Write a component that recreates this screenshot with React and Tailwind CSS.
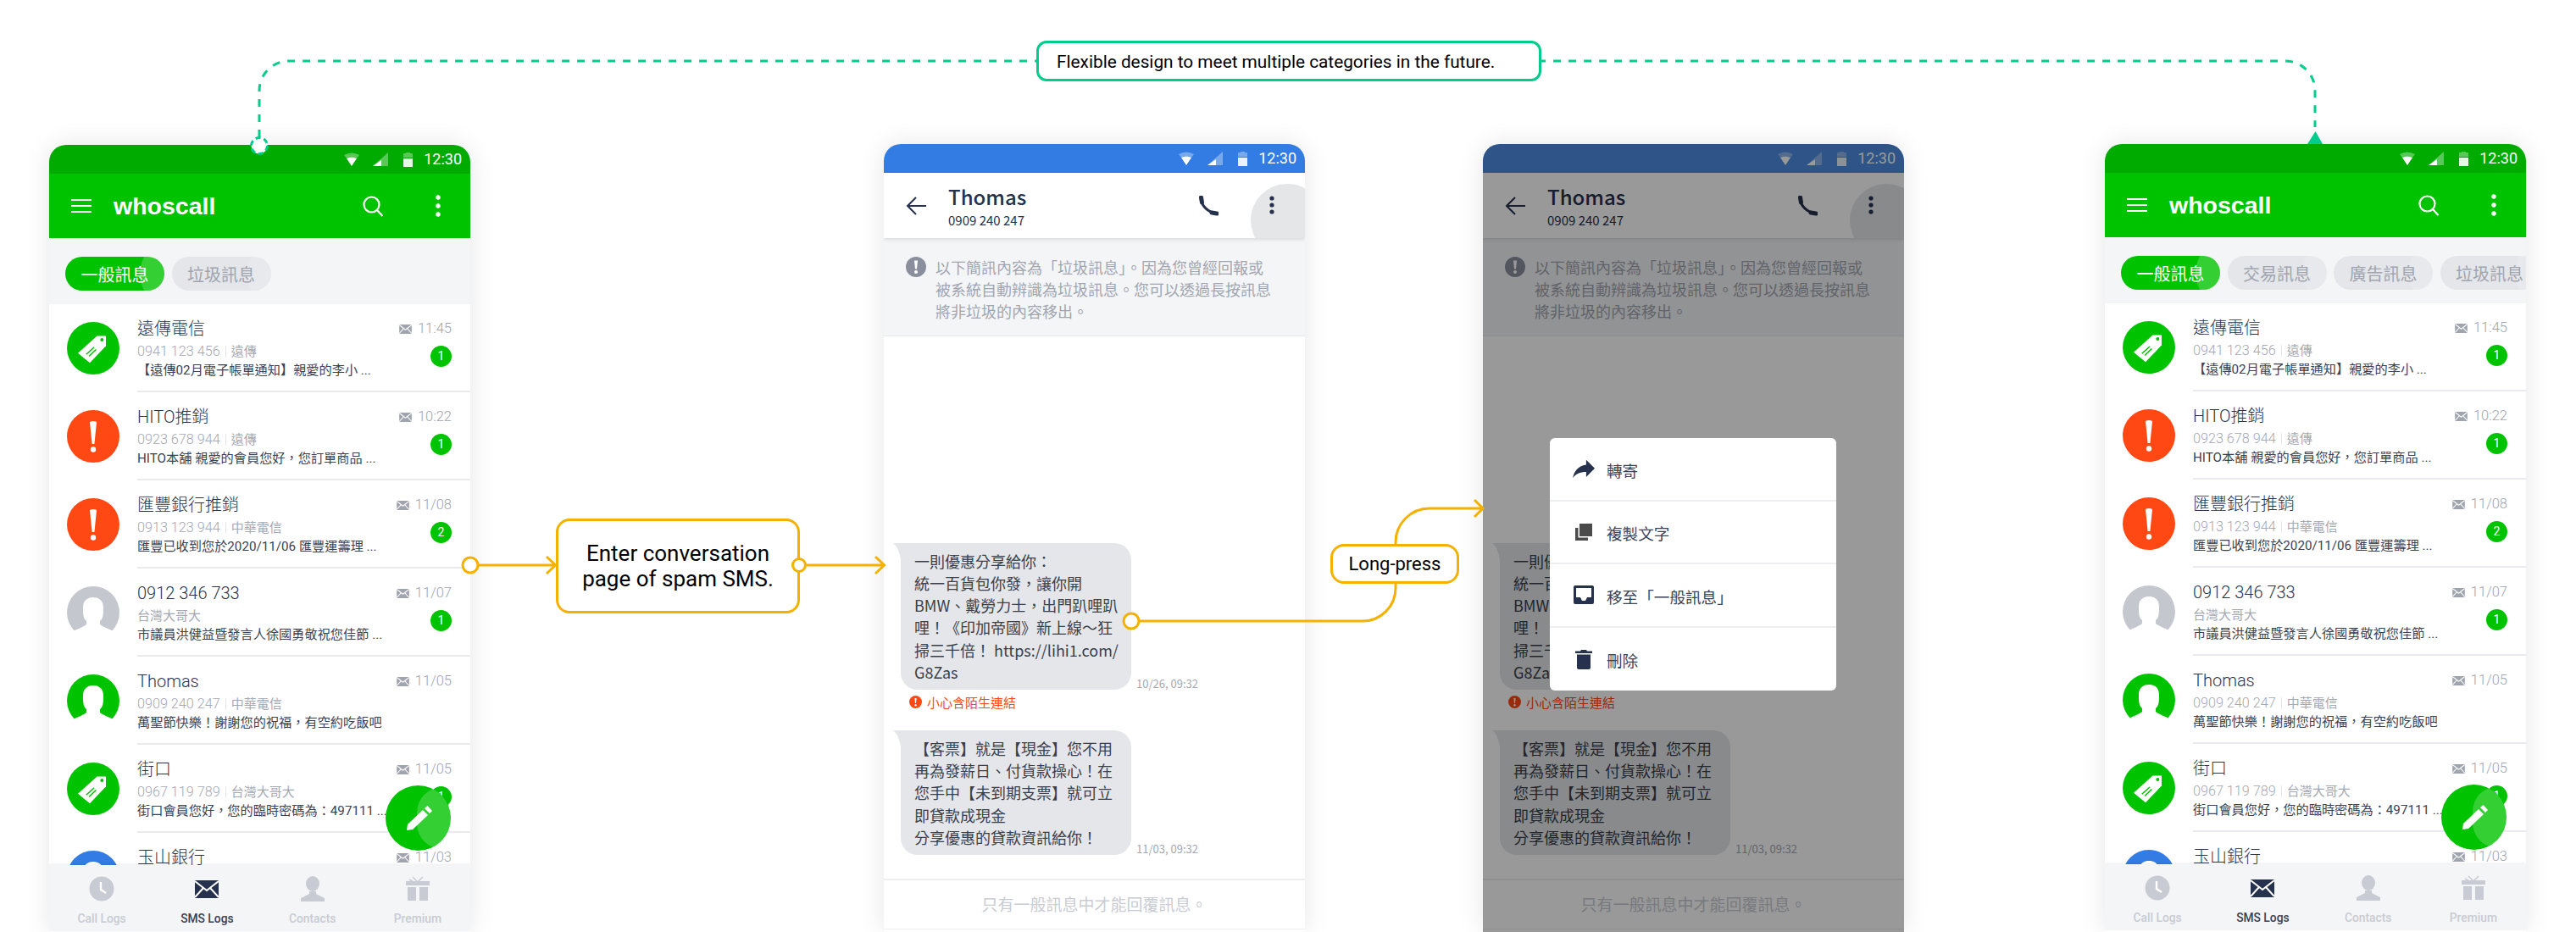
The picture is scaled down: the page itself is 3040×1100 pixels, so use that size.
import React from "react";

const rows = [
  { kind: "tag", title: "遠傳電信", num: "0941 123 456", carrier: "遠傳", text: "【遠傳02月電子帳單通知】親愛的李小 ...", time: "11:45", badge: 1 },
  { kind: "warn", title: "HITO推銷", num: "0923 678 944", carrier: "遠傳", text: "HITO本舖 親愛的會員您好，您訂單商品 ...", time: "10:22", badge: 1 },
  { kind: "warn", title: "匯豐銀行推銷", num: "0913 123 944", carrier: "中華電信", text: "匯豐已收到您於2020/11/06 匯豐運籌理 ...", time: "11/08", badge: 2 },
  { kind: "grey", title: "0912 346 733", carrier: "台灣大哥大", text: "市議員洪健益暨發言人徐國勇敬祝您佳節 ...", time: "11/07", badge: 1 },
  { kind: "green", title: "Thomas", num: "0909 240 247", carrier: "中華電信", text: "萬聖節快樂！謝謝您的祝福，有空約吃飯吧", time: "11/05" },
  { kind: "tag", title: "街口", num: "0967 119 789", carrier: "台灣大哥大", text: "街口會員您好，您的臨時密碼為：497111 ...", time: "11/05", badge: 1 },
  { kind: "blue", title: "玉山銀行", time: "11/03" },
];

function StatusBar({ bg }) {
  return (
    <div className={`h-[34px] shrink-0 flex items-center justify-end pr-[10px] ${bg}`}>
      <svg viewBox="0 0 18 16" className="w-[18px] h-[16px] mr-[16px]">
        <path d="M0 3 Q9 -2 18 3 L15 7 Q9 4 3 7Z" fill="#fff" fillOpacity="0.35" />
        <path d="M3 7 Q9 4 15 7 L9 16Z" fill="#fff" />
      </svg>
      <svg viewBox="0 0 18 16" className="w-[18px] h-[16px] mr-[18px]">
        <path d="M18 0V16H0Z" fill="#fff" fillOpacity="0.35" />
        <path d="M10 8.9V16H0Z" fill="#fff" />
      </svg>
      <svg viewBox="0 0 11 17" className="w-[11px] h-[17px] mr-[13px]">
        <path d="M3 0H8V1H11V6H0V1H3Z" fill="#fff" fillOpacity="0.35" />
        <rect y="7" width="11" height="10" fill="#fff" fillOpacity="0.9" />
      </svg>
      <span className="text-[18px] leading-none text-white font-[Roboto,sans-serif]">12:30</span>
    </div>
  );
}

function Tab({ label, active }) {
  return (
    <div className={`relative shrink-0 w-[117px] h-10 pt-[3px] rounded-full overflow-hidden flex items-center justify-center text-[20px] ${active ? "bg-[#00c300] text-white" : "bg-[#e4e6ea] text-[#a0a4ae]"}`}>
      <span className={`absolute left-[88px] top-[-20px] w-20 h-20 rounded-full ${active ? "bg-white/20" : "bg-white/15"}`} />
      <span className="relative">{label}</span>
    </div>
  );
}

function Avatar({ kind }) {
  const color = { tag: "#00c300", warn: "#ff4814", grey: "#c4c7ce", green: "#00c300", blue: "#327ce3" }[kind];
  return (
    <svg viewBox="0 0 62 62" className="w-[62px] h-[62px] shrink-0">
      <circle cx="31" cy="31" r="31" fill={color} />
      {kind === "tag" && (
        <>
          <path d="M46 16.5H35.5L13 36.7 27 48.3 46 28.3Z" fill="#fff" />
          <circle cx="41.3" cy="20.9" r="2" fill={color} />
          <path d="M22.7 38.3 32 30M26 40.5 34.4 32.5" stroke={color} strokeWidth="1.5" />
        </>
      )}
      {kind === "warn" && (
        <>
          <path d="M27 14Q31 12 35 14L32.4 40H29.6Z" fill="#fff" />
          <circle cx="31" cy="46.5" r="3.2" fill="#fff" />
        </>
      )}
      {(kind === "grey" || kind === "green" || kind === "blue") && (
        <path d="M6 54C12 50 20 48 23 45V41C19 38 19 32 19 25 19 16 25 13 31 13S43 16 43 25C43 32 43 38 39 41V45C42 48 50 50 56 54V62H6Z" fill="#fff" />
      )}
    </svg>
  );
}

function Mail({ className, color = "#a0a4ae" }) {
  return (
    <svg viewBox="0 0 28 21" className={className}>
      <rect width="28" height="21" fill={color} />
      <path d="M0 1 14 12 28 1M0 20 10 9M28 20 18 9" stroke="#fff" strokeWidth="2" fill="none" />
    </svg>
  );
}

function Row({ row }) {
  return (
    <div className="relative h-[104px] shrink-0 flex">
      <div className="pl-[21px] pt-[21px] w-[104px] shrink-0">
        <Avatar kind={row.kind} />
      </div>
      <div className="flex-1 min-w-0 flex border-b-2 border-[#e9eaee]">
        <div className="flex-1 min-w-0 pt-4">
          <div className="text-[20px] leading-[26px] font-light text-[#2b3448]">{row.title}</div>
          {row.carrier && (
            <div className="mt-[3px] flex items-center text-[15px] leading-[22px] text-[#a4a8b3]">
              {row.num && (
                <>
                  <span className="text-[16.2px] font-light">{row.num}</span>
                  <span className="mx-[6px] w-px h-[14px] bg-[#e4e6ea]" />
                </>
              )}
              <span>{row.carrier}</span>
            </div>
          )}
          {row.text && <div className="text-[15.2px] leading-[22px] whitespace-nowrap text-[#3a4253]">{row.text}</div>}
        </div>
        <div className="w-[110px] shrink-0 pr-[22px] pt-4 flex flex-col items-end">
          <div className="h-[26px] flex items-center gap-[7px] text-[16.5px] font-light text-[#a0a4ae]">
            <Mail className="w-[15px] h-[11px]" />
            <span>{row.time}</span>
          </div>
          {row.badge && (
            <div className="mt-[7px] w-[25px] h-[25px] rounded-full bg-[#00c300] flex items-center justify-center text-[14px] text-white">
              {row.badge}
            </div>
          )}
        </div>
      </div>
    </div>
  );
}

function NavItem({ label, active, children }) {
  return (
    <div className={`flex-1 flex flex-col items-center ${active ? "text-[#3a4253]" : "text-[#c8cbd3]"}`}>
      <div className="h-[32px] mt-[12px] flex items-center justify-center">{children}</div>
      <div className="mt-[11px] text-[13.8px] leading-[16px] font-medium">{label}</div>
    </div>
  );
}

function ListPhone({ tabs, shift }) {
  return (
    <div className={`relative w-[497px] h-[930px] shrink-0 rounded-t-[20px] overflow-hidden bg-white flex flex-col shadow-[0_0_30px_rgba(0,0,0,0.1)] font-[Roboto,'Noto_Sans_CJK_TC',sans-serif] ${shift}`}>
      <StatusBar bg="bg-[#00ab00]" />
      <div className="h-[76px] shrink-0 bg-[#00c300] flex items-center pl-[26px] pr-[35px]">
        <svg viewBox="0 0 24 16" className="w-6 h-4 shrink-0">
          <path d="M0 1H24M0 8H24M0 15H24" stroke="#fff" strokeWidth="2" />
        </svg>
        <span className="ml-[26px] text-[28.5px] font-bold text-white font-['Liberation_Sans',sans-serif]">whoscall</span>
        <svg viewBox="0 0 24 25" className="ml-auto w-6 h-[25px]" fill="none" stroke="#fff" strokeWidth="2.2">
          <circle cx="10.5" cy="10.5" r="9" />
          <path d="M17 17 23.5 24" />
        </svg>
        <svg viewBox="0 0 6 26" className="ml-[62px] w-[6px] h-[26px]" fill="#fff">
          <circle cx="3" cy="3" r="2.7" />
          <circle cx="3" cy="13" r="2.7" />
          <circle cx="3" cy="23" r="2.7" />
        </svg>
      </div>
      <div className="h-[78px] shrink-0 bg-[#f4f5f7] pt-[22px] pl-[19px] flex items-start gap-[8.5px] overflow-hidden">
        {tabs.map((t, i) => (
          <Tab key={t} label={t} active={i === 0} />
        ))}
      </div>
      <div className="flex-1 min-h-0 overflow-hidden flex flex-col">
        {rows.map((r) => (
          <Row key={r.title} row={r} />
        ))}
      </div>
      <div className="h-[78px] shrink-0 mb-[2px] bg-[#f4f5f7] flex shadow-[0_-1px_3px_rgba(0,0,0,0.08)] z-10">
        <NavItem label="Call Logs">
          <svg viewBox="0 0 30 30" className="w-[30px] h-[30px]">
            <circle cx="15" cy="15" r="14.5" fill="#c8cbd3" />
            <path d="M14 7V16L20 20" stroke="#fff" strokeWidth="2.4" fill="none" />
          </svg>
        </NavItem>
        <NavItem label="SMS Logs" active>
          <Mail className="w-[28px] h-[21px]" color="#26314d" />
        </NavItem>
        <NavItem label="Contacts">
          <svg viewBox="0 0 28 30" className="w-[28px] h-[30px]" fill="#c8cbd3">
            <ellipse cx="14" cy="9" rx="8" ry="9" />
            <path d="M10 18H18V21L28 26V30H0V26L10 21Z" />
          </svg>
        </NavItem>
        <NavItem label="Premium">
          <svg viewBox="0 0 28 30" className="w-[28px] h-[30px]" fill="#c8cbd3">
            <path d="M8 1 14 7 20 1M4 4 9 7" stroke="#c8cbd3" strokeWidth="1.5" fill="none" />
            <rect y="6" width="28" height="5" />
            <rect x="2" y="13" width="10" height="16" />
            <rect x="16" y="13" width="10" height="16" />
          </svg>
        </NavItem>
      </div>
      <div className="absolute left-[397px] top-[756px] z-20 w-[77px] h-[77px] rounded-full bg-[#00c300] overflow-hidden">
        <span className="absolute left-[37px] top-[2px] w-[60px] h-[73px] rounded-full bg-white/20" />
        <svg viewBox="0 0 77 77" className="absolute inset-0 w-[77px] h-[77px]" fill="#fff">
          <path d="M25 53 26 46 44 29 50 35 32 52Z" />
          <path d="M46 27 49.5 24 55 30 52 33Z" />
        </svg>
      </div>
    </div>
  );
}

function Bubble({ lines, time }) {
  return (
    <div className="flex items-end gap-[6px] ml-[20px]">
      <div className="relative w-[272px] shrink-0 rounded-[20px] rounded-tl-none bg-[#e4e6ea] px-4 py-2 text-[18px] leading-[26.2px] whitespace-nowrap text-[#3a3f4a]">
        <svg viewBox="0 0 10 28" className="absolute left-[-9.5px] top-0 w-[10px] h-[28px]">
          <path d="M0 0H10V28C9 14 6 5 0 0Z" fill="#e4e6ea" />
        </svg>
        {lines.map((l) => (
          <div key={l}>{l}</div>
        ))}
      </div>
      <span className="-mb-[2px] text-[13px] leading-[18px] text-[#a4a8b2] whitespace-nowrap">{time}</span>
    </div>
  );
}

function ChatPhone({ statusBg, children }) {
  return (
    <div className="relative w-[497px] h-[930px] shrink-0 rounded-t-[20px] overflow-hidden bg-white flex flex-col shadow-[0_0_30px_rgba(0,0,0,0.1)] font-['Noto_Sans_CJK_TC',sans-serif]">
      <StatusBar bg={statusBg} />
      <div className="relative z-10 h-[77px] shrink-0 bg-white flex items-center pl-[26px] shadow-[0_2px_4px_rgba(0,0,0,0.1)] overflow-hidden">
        <span className="absolute left-[433px] top-[13px] w-[86px] h-[86px] rounded-full bg-[#e4e6e8]" />
        <svg viewBox="0 0 24 24" className="w-6 h-6 shrink-0" fill="none" stroke="#26314d" strokeWidth="2">
          <path d="M24 12H2M12 2 2 12 12 22" />
        </svg>
        <div className="ml-[26px] pt-[2px] text-[#26314d]">
          <div className="text-[24px] leading-[30px] font-medium">Thomas</div>
          <div className="mt-[3px] text-[15px] leading-[20px]">0909 240 247</div>
        </div>
        <svg viewBox="0 0 24 24" className="absolute left-[371px] top-[27px] w-6 h-6" fill="none" stroke="#26314d">
          <path d="M3 3C4 12 11 19 21 21" strokeWidth="3" />
          <path d="M3.5 2 4.5 8M16 20 22 21" strokeWidth="5" strokeLinecap="round" />
        </svg>
        <svg viewBox="0 0 6 22" className="absolute left-[455px] top-[27px] w-[6px] h-[22px]" fill="#26314d">
          <circle cx="3" cy="3" r="2.6" />
          <circle cx="3" cy="11" r="2.6" />
          <circle cx="3" cy="19" r="2.6" />
        </svg>
      </div>
      <div className="h-[116px] shrink-0 bg-[#f4f5f7] border-b border-[#e8e9ec] flex pl-[26px] pt-[21px]">
        <svg viewBox="0 0 24 24" className="w-6 h-6 shrink-0 mt-[1px]">
          <circle cx="12" cy="12" r="12" fill="#8a8f9e" />
          <path d="M10 4.5H14L13 14.5H11Z" fill="#fff" />
          <circle cx="12" cy="18" r="2" fill="#fff" />
        </svg>
        <div className="ml-[11px] text-[18px] leading-[26px] whitespace-nowrap text-[#a1a5b0]">
          <div>以下簡訊內容為「垃圾訊息」。因為您曾經回報或</div>
          <div>被系統自動辨識為垃圾訊息。您可以透過長按訊息</div>
          <div>將非垃圾的內容移出。</div>
        </div>
      </div>
      <div className="flex-1 min-h-0 flex flex-col justify-end pb-[28px]">
        <Bubble
          lines={["一則優惠分享給你：", "統一百貨包你發，讓你開", "BMW、戴勞力士，出門趴哩趴", "哩！《印加帝國》新上線～狂", "掃三千倍！ https://lihi1.com/", "G8Zas"]}
          time="10/26, 09:32"
        />
        <div className="mt-[6px] ml-[30px] h-[18px] flex items-center gap-[6px] text-[15px] text-[#ff4814]">
          <svg viewBox="0 0 15 15" className="w-[15px] h-[15px]">
            <circle cx="7.5" cy="7.5" r="7.5" fill="#ff4814" />
            <path d="M6.4 3H8.6L8 9H7Z" fill="#fff" />
            <circle cx="7.5" cy="11.2" r="1.2" fill="#fff" />
          </svg>
          <span>小心含陌生連結</span>
        </div>
        <div className="mt-[24px]">
          <Bubble
            lines={["【客票】就是【現金】您不用", "再為發薪日、付貨款操心！在", "您手中【未到期支票】就可立", "即貸款成現金", "分享優惠的貸款資訊給你！"]}
            time="11/03, 09:32"
          />
        </div>
      </div>
      <div className="h-[60px] shrink-0 mb-[3px] border-t-2 border-b border-[#eceef1] flex items-center justify-center text-[19px] text-[#c9ccd3]">
        只有一般訊息中才能回覆訊息。
      </div>
      {children}
    </div>
  );
}

function MenuRow({ label, last, children }) {
  return (
    <div className={`h-[74.5px] flex items-center pl-[27px] text-[18.6px] text-[#3b4459] ${last ? "" : "border-b-2 border-[#eceef0]"}`}>
      <div className="w-[26px] flex justify-center shrink-0">{children}</div>
      <span className="ml-[14px] pt-[3px]">{label}</span>
    </div>
  );
}

function Dialog() {
  return (
    <>
      <div className="absolute inset-0 z-20 bg-black/40" />
      <div className="absolute left-[79px] top-[347px] z-30 w-[338px] h-[298px] rounded-[6px] bg-white overflow-hidden">
        <MenuRow label="轉寄">
          <svg viewBox="3 5 18 15" className="w-[26px] h-[23px]" fill="#26314d">
            <path d="M14 9V5l7 7-7 7v-4.1c-5 0-8.5 1.6-11 5.1 1-5 4-10 11-11z" />
          </svg>
        </MenuRow>
        <MenuRow label="複製文字">
          <svg viewBox="0 0 20 20" className="w-5 h-5" fill="#4a4a4a">
            <rect x="5" y="0" width="15" height="15" />
            <path d="M0 5H3.5V16.5H15V20H0Z" />
          </svg>
        </MenuRow>
        <MenuRow label="移至「一般訊息」">
          <svg viewBox="0 0 24 22" className="w-6 h-[22px]">
            <rect width="24" height="22" rx="2" fill="#26314d" />
            <path d="M3 3H21V14H16L14 18H10L8 14H3Z" fill="#fff" />
          </svg>
        </MenuRow>
        <MenuRow label="刪除" last>
          <svg viewBox="0 0 20 24" className="w-5 h-6" fill="#26314d">
            <path d="M0 2.5H6L7 1H13L14 2.5H20V5H0Z" />
            <path d="M2 6.5H18V22a2 2 0 0 1-2 2H4a2 2 0 0 1-2-2Z" />
          </svg>
        </MenuRow>
      </div>
    </>
  );
}

function Connectors() {
  const orange = "#f5b100";
  const teal = "#00cc8c";
  return (
    <svg viewBox="0 0 3040 1100" className="absolute left-0 top-0 z-40 w-[3040px] h-[1100px] pointer-events-none" fill="none">
      <path d="M306 162V107A35 35 0 0 1 341 72H2697A35 35 0 0 1 2732 107V150" stroke={teal} strokeWidth="3" strokeDasharray="9 9" />
      <circle cx="306" cy="172" r="9.5" fill="#fff" stroke={teal} strokeWidth="3" strokeDasharray="6 4" />
      <path d="M2732.5 155 2741 170H2723Z" fill={teal} />

      <path d="M564 667H655M645 657 655.5 667 645 677" stroke={orange} strokeWidth="3" />
      <path d="M952 667H1043M1033 657 1043.5 667 1033 677" stroke={orange} strokeWidth="3" />
      <path d="M1344 733H1608A39 39 0 0 0 1647 694V640A40 40 0 0 1 1687 600H1749M1740 590 1750 600 1740 610" stroke={orange} strokeWidth="3" />

      <circle cx="555" cy="667" r="9" fill="#fff" stroke={orange} strokeWidth="3" />
      <circle cx="1335" cy="733" r="9" fill="#fff" stroke={orange} strokeWidth="3" />
    </svg>
  );
}

export default function App() {
  return (
    <div className="relative w-[3040px] h-[1100px] overflow-hidden bg-white">
      <div className="flex items-start pl-[58px] pt-[170px]">
        <ListPhone tabs={["一般訊息", "垃圾訊息"]} shift="mt-px" />
        <div className="ml-[488px]">
          <ChatPhone statusBg="bg-[#327ce3]" />
        </div>
        <div className="ml-[210px]">
          <ChatPhone statusBg="bg-[#4e8ce3]">
            <Dialog />
          </ChatPhone>
        </div>
        <div className="ml-[237px]">
          <ListPhone tabs={["一般訊息", "交易訊息", "廣告訊息", "垃圾訊息"]} shift="" />
        </div>
      </div>

      <Connectors />

      <div className="absolute left-[1223px] top-[48px] z-50 w-[596px] h-[48px] pl-[21px] pt-[3px] rounded-[12px] border-[3px] border-[#00cc8c] bg-white flex items-center text-[20.8px] text-black font-[Roboto,sans-serif]">
        Flexible design to meet multiple categories in the future.
      </div>
      <div className="absolute left-[656px] top-[612px] z-50 w-[288px] h-[112px] rounded-[16px] border-[3px] border-[#f5b100] bg-white flex items-center justify-center text-center text-[26px] leading-[30px] text-black font-[Roboto,sans-serif]">
        Enter conversation
        <br />
        page of spam SMS.
      </div>
      <div className="absolute left-[934px] top-[658px] z-50 w-[18px] h-[18px] rounded-full border-[3px] border-[#f5b100] bg-white" />
      <div className="absolute left-[1570px] top-[642px] z-50 w-[152px] h-[47px] rounded-[16px] border-[3px] border-[#f5b100] bg-white flex items-center justify-center text-[22px] text-black font-[Roboto,sans-serif]">
        Long-press
      </div>
    </div>
  );
}
